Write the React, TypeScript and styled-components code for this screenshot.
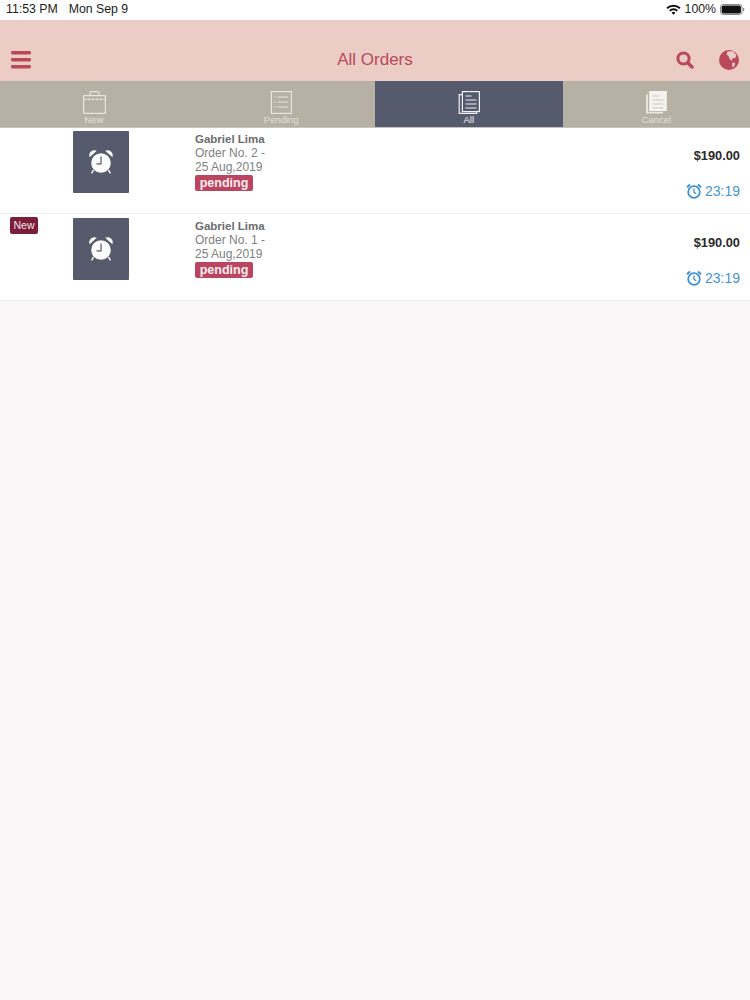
import React from 'react';
import styled, { createGlobalStyle } from 'styled-components';

const GlobalStyle = createGlobalStyle`
  html, body {
    margin: 0;
    padding: 0;
    background: #f9f7f8;
    font-family: "Liberation Sans", Arial, sans-serif;
  }
`;

const Page = styled.div`
  width: 750px;
  height: 1000px;
  overflow: hidden;
  background: #f9f7f8;
`;

const StatusBar = styled.div`
  height: 20px;
  padding: 0 5px 2px 6px;
  display: flex;
  align-items: center;
  justify-content: space-between;
  background: #fff;
  color: #1c1c1c;
  font-size: 12.3px;
  box-sizing: border-box;
`;

const StatusGroup = styled.div`
  display: flex;
  align-items: center;
  gap: 11px;
`;

const StatusRight = styled.div`
  display: flex;
  align-items: center;
  gap: 4px;
`;

const Header = styled.header`
  height: 61px;
  padding: 0 11px;
  display: flex;
  align-items: flex-end;
  justify-content: space-between;
  background: #eccdc5;
  color: #b9485c;
  box-sizing: border-box;
`;

const HeaderSlot = styled.div`
  width: 100px;
  height: 42px;
  display: flex;
  align-items: center;
  gap: 25px;
  justify-content: ${p => (p.$end ? 'flex-end' : 'flex-start')};
`;

const Title = styled.h1`
  margin: 0 0 11px;
  font-size: 17px;
  line-height: 20px;
  font-weight: 400;
  color: #b9485c;
`;

const TabBar = styled.nav`
  height: 47px;
  display: grid;
  grid-template-columns: repeat(4, 1fr);
  background: #b6b0a5;
  border-bottom: 1px solid #c9c5bd;
  box-sizing: border-box;
`;

const Tab = styled.div`
  display: flex;
  flex-direction: column;
  align-items: center;
  padding-top: 9px;
  background: ${p => (p.$active ? '#555a6c' : 'transparent')};
  color: ${p => (p.$active ? '#f4f4f6' : '#e4e1db')};
  font-size: 9.5px;
  line-height: 11px;
`;

const TabIcon = styled.svg`
  width: 26px;
  height: 24px;
  display: block;
`;

const Row = styled.div`
  height: 86px;
  display: flex;
  padding: 3px 10px 0;
  background: #fff;
  border-bottom: 1px solid #eeeced;
  box-sizing: border-box;
  & + & {
    height: 87px;
    padding-top: 4px;
  }
`;

const BadgeSlot = styled.div`
  width: 63px;
  flex: none;
`;

const NewBadge = styled.span`
  display: block;
  width: 28px;
  height: 17px;
  margin-top: -1px;
  line-height: 16px;
  text-align: center;
  border-radius: 2px;
  background: #7b1e3a;
  color: #f3e6ea;
  font-size: 10.5px;
`;

const Thumb = styled.div`
  width: 56px;
  height: 62px;
  flex: none;
  display: flex;
  align-items: center;
  justify-content: center;
  padding-bottom: 1px;
  box-sizing: border-box;
  background: #555a6c;
  border-radius: 1px;
`;

const Info = styled.div`
  width: 90px;
  margin-left: 66px;
  padding-top: 1px;
  color: #808080;
  font-size: 12px;
  line-height: 13.5px;
`;

const Name = styled.div`
  margin-bottom: 1px;
  font-weight: 700;
  font-size: 11.5px;
  line-height: 14px;
  color: #6c6c6c;
`;

const StatusPill = styled.span`
  display: block;
  width: 58px;
  height: 16px;
  margin-top: 1px;
  line-height: 16px;
  text-align: center;
  border-radius: 2px;
  background: #bb4560;
  color: #fbeef0;
  font-size: 12.5px;
  font-weight: 700;
`;

const Side = styled.div`
  margin-left: auto;
  padding-top: 17px;
  display: flex;
  flex-direction: column;
  align-items: flex-end;
`;

const Price = styled.div`
  font-size: 12.8px;
  line-height: 15px;
  font-weight: 700;
  color: #2a2a2a;
`;

const Timer = styled.div`
  margin-top: 20px;
  display: flex;
  align-items: center;
  gap: 3px;
  font-size: 14px;
  line-height: 16px;
  color: #4795d3;
`;

const MenuIcon = () => (
  <svg width="20" height="18" viewBox="0 0 20 18">
    <g fill="#b9485c">
      <rect y="0" width="20" height="3.4" rx="1.4" />
      <rect y="7" width="20" height="3.4" rx="1.4" />
      <rect y="14" width="20" height="3.4" rx="1.4" />
    </g>
  </svg>
);

const SearchIcon = () => (
  <svg width="18" height="18" viewBox="0 0 18 18">
    <circle cx="7.5" cy="7.5" r="5.6" fill="none" stroke="#b9485c" strokeWidth="3" />
    <path d="M11.8 11.8 L16 16" stroke="#b9485c" strokeWidth="3.4" strokeLinecap="round" />
  </svg>
);

const GlobeIcon = () => (
  <svg width="20" height="20" viewBox="0 0 20 20">
    <circle cx="10" cy="10" r="10" fill="#b9485c" />
    <path
      d="M8.5 1.5 L14 1.2 L17.5 5 L16 8.5 L13.5 8 L13 11 L10.5 9 L9.5 6 L7.5 4.5 Z M13 13 L16 12.5 L15.5 16 L13.5 17.5 Z"
      fill="#eccdc5"
    />
  </svg>
);

const WifiIcon = () => (
  <svg width="15" height="11" viewBox="0 0 15 11">
    <path d="M0.4 3.6 A10 10 0 0 1 14.6 3.6 L13.2 5.1 A8 8 0 0 0 1.8 5.1 Z" fill="#111" />
    <path d="M3 6.2 A6.4 6.4 0 0 1 12 6.2 L10.6 7.6 A4.4 4.4 0 0 0 4.4 7.6 Z" fill="#111" />
    <path d="M5.6 8.7 A2.8 2.8 0 0 1 9.4 8.7 L7.5 10.8 Z" fill="#111" />
  </svg>
);

const BatteryIcon = () => (
  <svg width="25" height="11" viewBox="0 0 25 11">
    <rect x="0.5" y="0.5" width="21.5" height="10" rx="2.6" fill="none" stroke="#888" />
    <rect x="1.6" y="1.6" width="19.3" height="7.8" rx="1.6" fill="#111" />
    <path d="M23 3.8 C24 4.1 24.4 4.7 24.4 5.5 C24.4 6.3 24 6.9 23 7.2 Z" fill="#888" />
  </svg>
);

const BriefcaseGlyph = () => (
  <TabIcon viewBox="0 0 26 24">
    <g fill="none" stroke="#e9e6e0" strokeWidth="1.2">
      <rect x="2.6" y="5.6" width="21.8" height="17.8" rx="0.6" />
      <path d="M9 5.6 V3 Q9 1.6 10.4 1.6 H16.6 Q18 1.6 18 3 V5.6" />
      <path d="M2.6 9.4 H24.4" strokeDasharray="3 1" />
    </g>
  </TabIcon>
);

const ListGlyph = () => (
  <TabIcon viewBox="0 0 26 24">
    <g fill="none" stroke="#e9e6e0" strokeWidth="1.2">
      <rect x="3.4" y="1.6" width="20" height="21.8" />
      <path d="M9.5 7 H20 M9.5 12 H20 M9.5 17 H20" />
      <path d="M6 7 H7.6 M6 12 H7.6 M6 17 H7.6" />
    </g>
  </TabIcon>
);

const PagesGlyph = () => (
  <TabIcon viewBox="0 0 26 24">
    <g fill="none" stroke="#eef0f4" strokeWidth="1.2">
      <rect x="6.4" y="1.6" width="17" height="20" />
      <path d="M6.4 4.6 H3.2 V23.4 H20.6 V21.6" />
      <path d="M9.5 6 H15.5 M9.5 10 H20.5 M9.5 14 H20.5 M9.5 18 H20.5" />
    </g>
  </TabIcon>
);

const PagesFilledGlyph = () => (
  <TabIcon viewBox="0 0 26 24">
    <path d="M3 4.6 H5 V21.8 H20 V23.4 H3 Z" fill="#e9e6e0" />
    <rect x="6.2" y="1" width="17.6" height="20" fill="#f5f3ef" />
    <path d="M9.5 6 H15.5 M9.5 10 H20.5 M9.5 14 H20.5 M9.5 18 H20.5" stroke="#c9c5bd" strokeWidth="1.1" />
  </TabIcon>
);

const AlarmClock = () => (
  <svg width="26" height="26" viewBox="0 0 26 26">
    <g fill="#fbfbfc">
      <circle cx="13" cy="14" r="9.8" />
      <path d="M1.6 8.2 A5.2 5.2 0 0 1 8.8 1.8 Z" />
      <path d="M24.4 8.2 A5.2 5.2 0 0 0 17.2 1.8 Z" />
      <path d="M5.5 21 L3.6 24.4 M20.5 21 L22.4 24.4" stroke="#fbfbfc" strokeWidth="1.5" />
    </g>
    <path d="M13 7.6 V14.8 H8.6" fill="none" stroke="#555a6c" strokeWidth="1.2" />
  </svg>
);

const TimerIcon = () => (
  <svg width="16" height="16" viewBox="0 0 16 16">
    <g fill="none" stroke="#3f92d2" strokeWidth="1.8">
      <circle cx="8" cy="9" r="5.8" />
      <path d="M8 5.6 V9.4 L10.2 10.8" strokeWidth="1.3" />
      <path d="M1 4.2 L4 1.4 M15 4.2 L12 1.4" strokeWidth="2" />
    </g>
  </svg>
);

const tabs = [
  { label: 'New', icon: <BriefcaseGlyph /> },
  { label: 'Pending', icon: <ListGlyph /> },
  { label: 'All', icon: <PagesGlyph />, active: true },
  { label: 'Cancel', icon: <PagesFilledGlyph /> },
];

const orders = [
  { no: 2, isNew: false },
  { no: 1, isNew: true },
];

const App: React.FC = () => (
  <Page>
    <GlobalStyle />
    <StatusBar>
      <StatusGroup>
        <span>11:53 PM</span>
        <span>Mon Sep 9</span>
      </StatusGroup>
      <StatusRight>
        <WifiIcon />
        <span>100%</span>
        <BatteryIcon />
      </StatusRight>
    </StatusBar>

    <Header>
      <HeaderSlot>
        <MenuIcon />
      </HeaderSlot>
      <Title>All Orders</Title>
      <HeaderSlot $end>
        <SearchIcon />
        <GlobeIcon />
      </HeaderSlot>
    </Header>

    <TabBar>
      {tabs.map(tab => (
        <Tab key={tab.label} $active={tab.active}>
          {tab.icon}
          {tab.label}
        </Tab>
      ))}
    </TabBar>

    {orders.map(order => (
      <Row key={order.no}>
        <BadgeSlot>{order.isNew && <NewBadge>New</NewBadge>}</BadgeSlot>
        <Thumb>
          <AlarmClock />
        </Thumb>
        <Info>
          <Name>Gabriel Lima</Name>
          <div>Order No. {order.no} -</div>
          <div>25 Aug,2019</div>
          <StatusPill>pending</StatusPill>
        </Info>
        <Side>
          <Price>$190.00</Price>
          <Timer>
            <TimerIcon />
            23:19
          </Timer>
        </Side>
      </Row>
    ))}
  </Page>
);

export default App;
